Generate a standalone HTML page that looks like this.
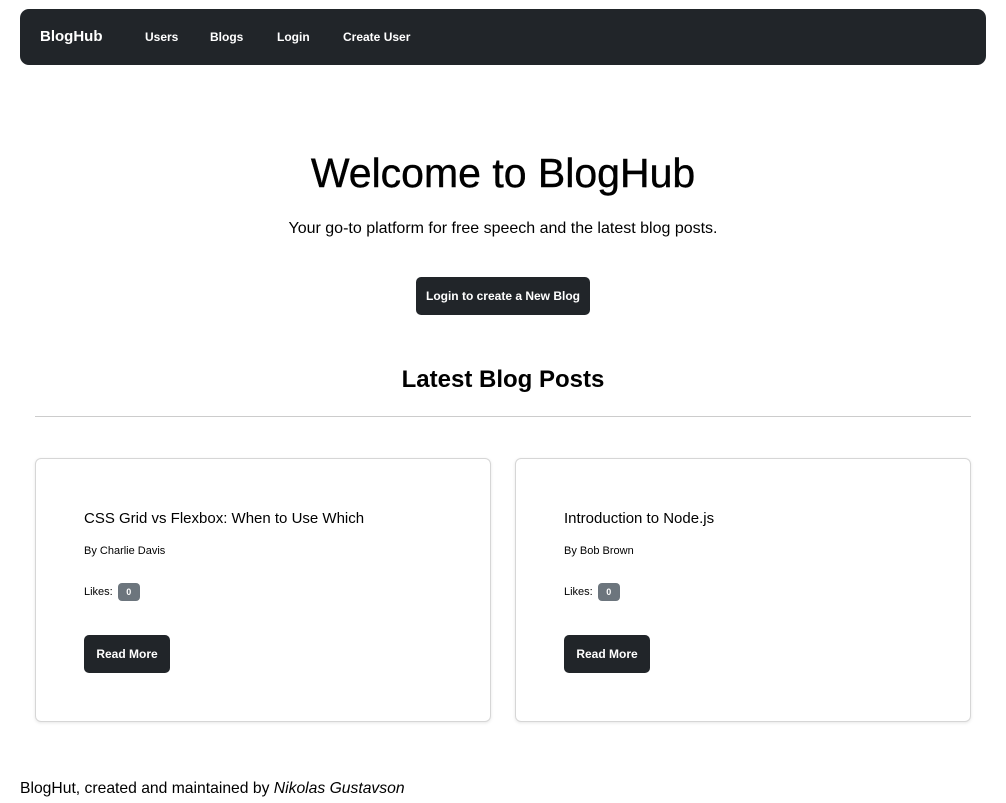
<!DOCTYPE html>
<html><head><style>
*{box-sizing:border-box;margin:0;padding:0}
body{width:1006px;height:803px;background:#fff;font-family:"Liberation Sans",sans-serif;color:#000;position:relative;overflow:hidden}
.nav{position:absolute;left:20px;top:9px;width:966px;height:56px;background:#212529;border-radius:9px;color:#fff}
.nav span{position:absolute;top:0;line-height:56px;font-weight:bold;font-size:12px}
.a{position:absolute;white-space:nowrap}
.btn{position:absolute;background:#212529;color:#fff;border-radius:5px;font-weight:bold;font-size:12px;text-align:center}
.card{position:absolute;top:458px;width:456px;height:264px;border:1px solid #d6d6d6;border-radius:6px;box-shadow:0 1px 3px rgba(0,0,0,.1)}
.badge{display:inline-block;background:#6c757d;color:#fff;font-size:9px;font-weight:bold;border-radius:4px;width:22px;height:18px;line-height:18px;text-align:center;vertical-align:middle;margin-left:2px}
</style></head><body>
<div class="nav">
<span style="left:20px;font-size:15px">BlogHub</span>
<span style="left:125px">Users</span>
<span style="left:190px">Blogs</span>
<span style="left:257px">Login</span>
<span style="left:323px">Create User</span>
</div>
<div class="a" style="left:0;width:1006px;text-align:center;top:149px;font-size:41px;line-height:48px;-webkit-text-stroke:0.4px #000">Welcome to BlogHub</div>
<div class="a" style="left:0;width:1006px;text-align:center;top:220px;font-size:16px;line-height:18px">Your go-to platform for free speech and the latest blog posts.</div>
<div class="btn" style="left:416px;top:277px;width:174px;height:38px;line-height:38px">Login to create a New Blog</div>
<div class="a" style="left:0;width:1006px;text-align:center;top:365px;font-size:24px;font-weight:bold;line-height:30px">Latest Blog Posts</div>
<div class="a" style="left:35px;top:416px;width:936px;height:1px;background:#ccc"></div>
<div class="card" style="left:35px">
<div class="a" style="left:48px;top:51px;font-size:15px">CSS Grid vs Flexbox: When to Use Which</div>
<div class="a" style="left:48px;top:86px;font-size:11px">By Charlie Davis</div>
<div class="a" style="left:48px;top:124px;font-size:11px">Likes: <span class="badge">0</span></div>
<div class="btn" style="left:48px;top:176px;width:86px;height:38px;line-height:38px">Read More</div>
</div>
<div class="card" style="left:515px">
<div class="a" style="left:48px;top:51px;font-size:15px">Introduction to Node.js</div>
<div class="a" style="left:48px;top:86px;font-size:11px">By Bob Brown</div>
<div class="a" style="left:48px;top:124px;font-size:11px">Likes: <span class="badge">0</span></div>
<div class="btn" style="left:48px;top:176px;width:86px;height:38px;line-height:38px">Read More</div>
</div>
<div class="a" style="left:20px;top:780px;font-size:15.7px">BlogHut, created and maintained by <i>Nikolas Gustavson</i></div>
</body></html>
